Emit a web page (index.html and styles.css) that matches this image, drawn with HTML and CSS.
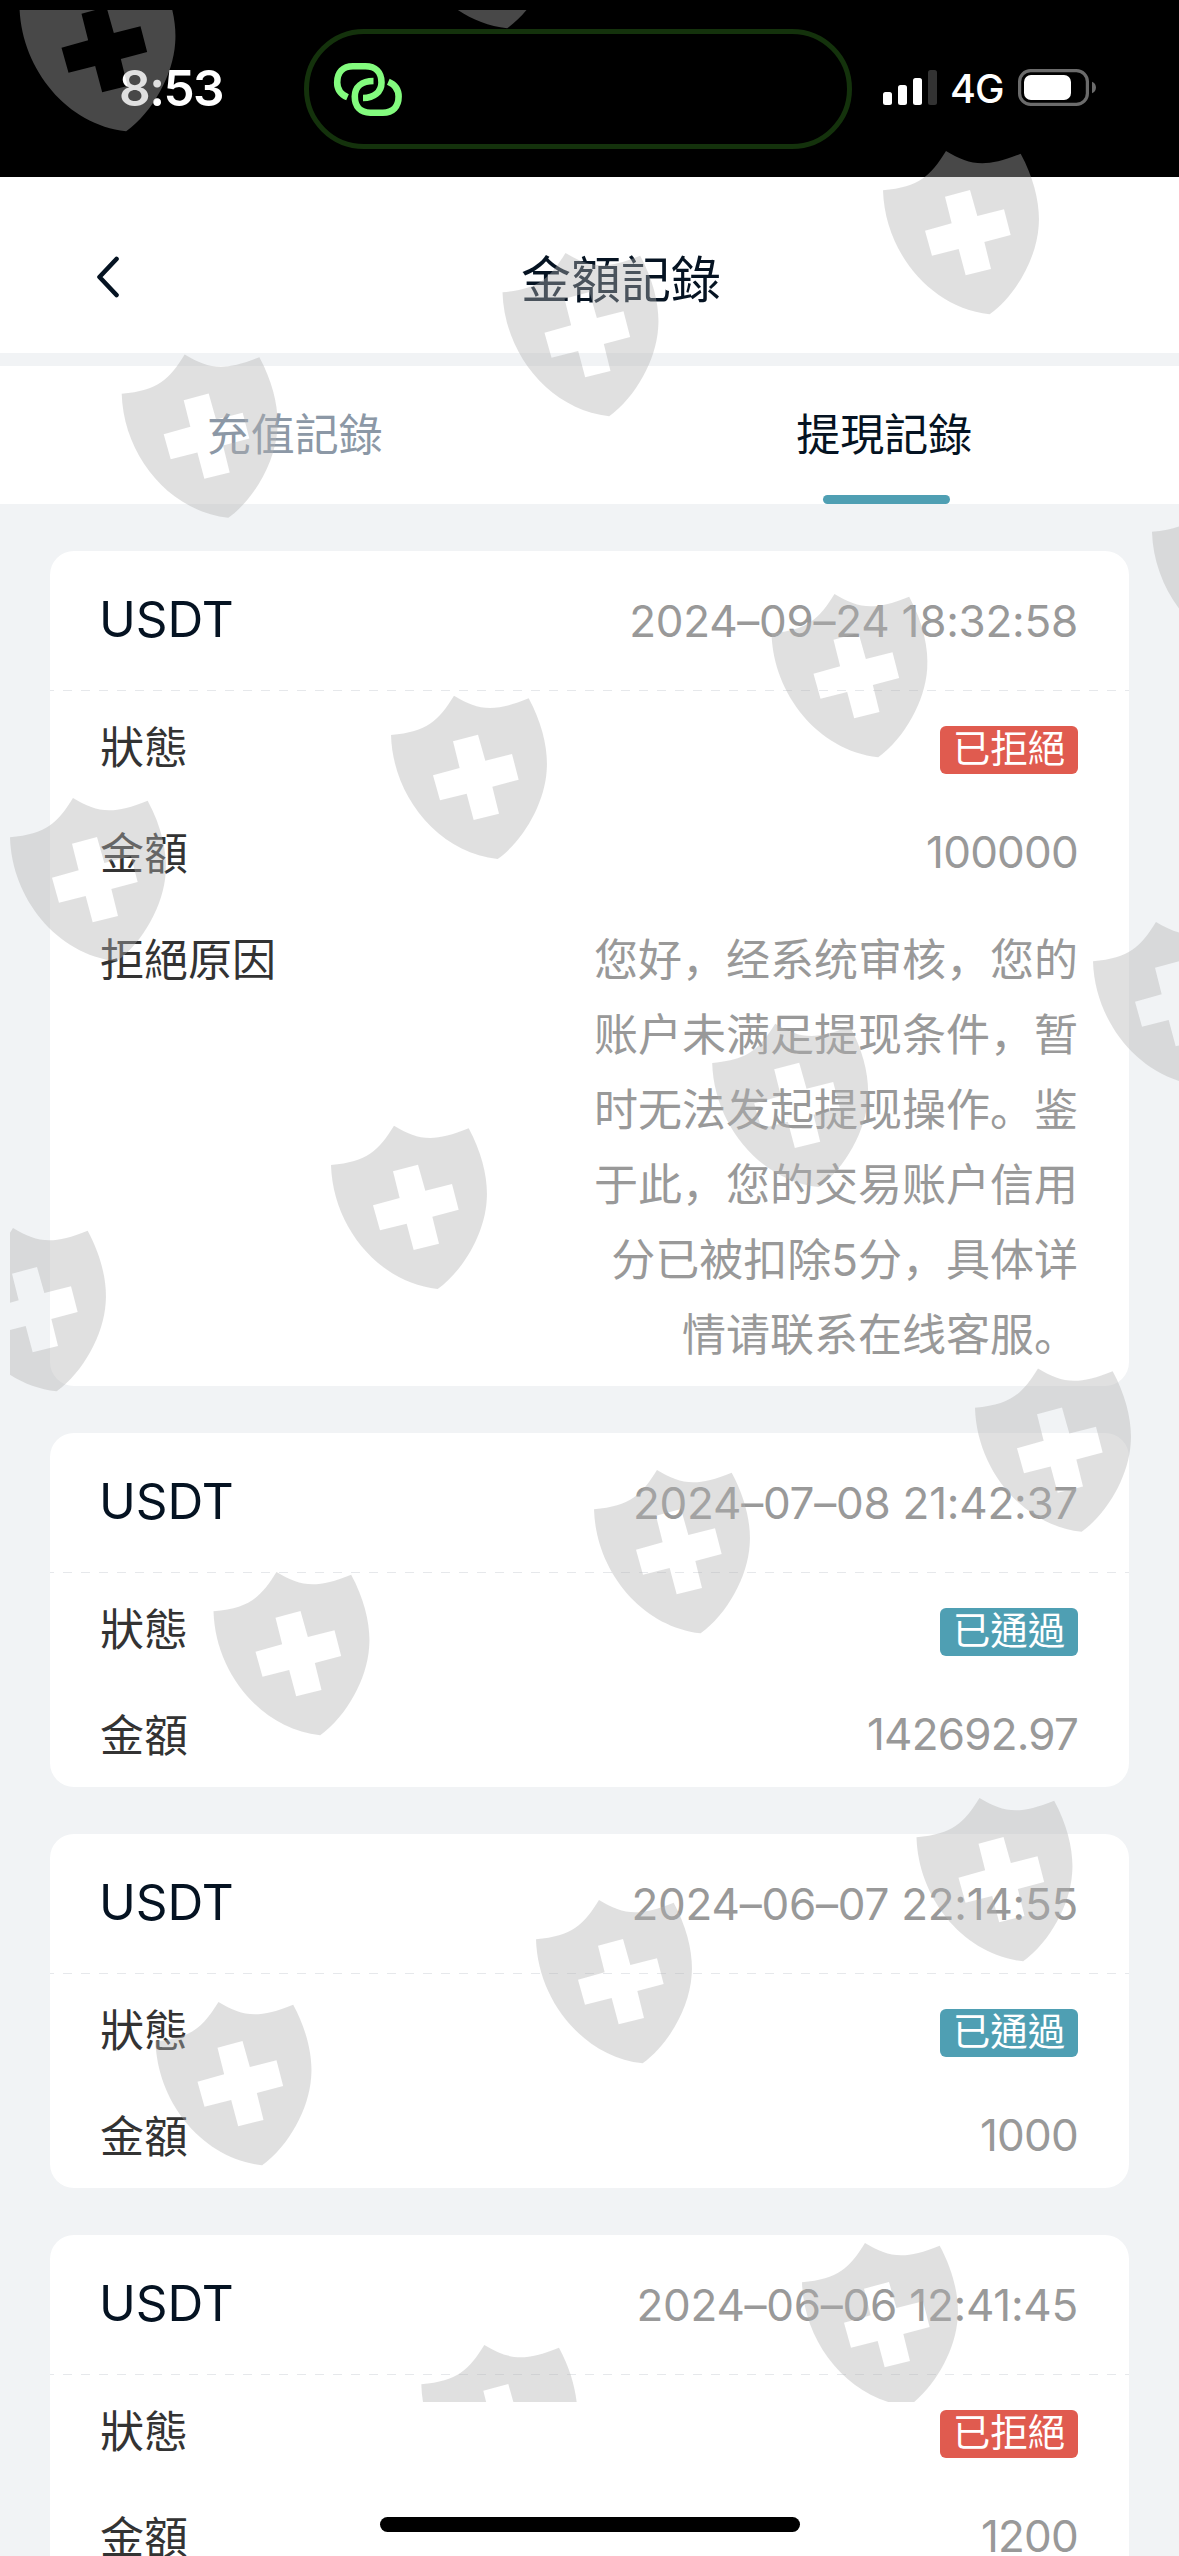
FILE: index.html
```html
<!DOCTYPE html>
<html lang="zh-Hant">
<head>
<meta charset="utf-8">
<title>金額記錄</title>
<link rel="stylesheet" href="styles.css">
</head>
<body>
<div class="screen">
  <header class="status-bar">
    <div class="clock">8:53</div>
    <div class="island">
      <svg class="link-icon" viewBox="333 61 70 55" width="70" height="55">
        <path d="M347.5 96.3C341 93.5 337.2 88.500 337.2 81.500C337.200 71.500 343 65.300 353 65.300H365.500C375.500 65.300 381.500 71.500 381.500 81.500C381.500 91 374 97 363 97"/>
        <path d="M388.300 80.700C394.800 83.500 398.600 88.500 398.600 95.500C398.600 105.500 392.800 111.700 382.800 111.700H370.300C360.300 111.700 354.800 105.500 354.800 95.500C354.800 86 361.800 80 373.500 80"/>
      </svg>
    </div>
    <div class="indicators">
      <div class="signal"><i class="bar b1"></i><i class="bar b2"></i><i class="bar b3"></i><i class="bar b4"></i></div>
      <span class="network">4G</span>
      <svg class="battery" viewBox="0 0 79 37" width="79" height="37">
        <rect class="battery-shell" x="1.600" y="1.600" width="67.800" height="33.800" rx="11"/>
        <rect class="battery-level" x="6" y="6" width="47" height="25" rx="7"/>
        <path class="battery-tip" d="M74 12.800C79.300 14.500 79.300 22.500 74 24.200Z"/>
      </svg>
    </div>
  </header>

  <nav class="navbar">
    <svg class="back" viewBox="0 0 24 42" width="24" height="42"><path d="M21.500 3L4.500 21L21.500 39"/></svg>
    <h1 class="title">金額記錄</h1>
  </nav>

  <div class="tabs">
    <div class="tab"><span>充值記錄</span></div>
    <div class="tab active"><span>提現記錄</span></div>
  </div>

  <main class="records">
    <section class="card">
      <div class="card-head"><span class="coin">USDT</span><time class="date">2024–09–24 18:32:58</time></div>
      <div class="card-body">
        <div class="row"><span class="label">狀態</span><span class="badge rejected">已拒絕</span></div>
        <div class="row"><span class="label">金額</span><span class="value">100000</span></div>
        <div class="row"><span class="label">拒絕原因</span><p class="reason" lang="zh-Hans">您好，经系统审核，您的账户未满足提现条件，暂时无法发起提现操作。鉴于此，您的交易账户信用分已被扣除5分，具体详情请联系在线客服。</p></div>
      </div>
    </section>
    <section class="card">
      <div class="card-head"><span class="coin">USDT</span><time class="date">2024–07–08 21:42:37</time></div>
      <div class="card-body">
        <div class="row"><span class="label">狀態</span><span class="badge approved">已通過</span></div>
        <div class="row"><span class="label">金額</span><span class="value">142692.97</span></div>
      </div>
    </section>
    <section class="card">
      <div class="card-head"><span class="coin">USDT</span><time class="date">2024–06–07 22:14:55</time></div>
      <div class="card-body">
        <div class="row"><span class="label">狀態</span><span class="badge approved">已通過</span></div>
        <div class="row"><span class="label">金額</span><span class="value">1000</span></div>
      </div>
    </section>
    <section class="card">
      <div class="card-head"><span class="coin">USDT</span><time class="date">2024–06–06 12:41:45</time></div>
      <div class="card-body">
        <div class="row"><span class="label">狀態</span><span class="badge rejected">已拒絕</span></div>
        <div class="row"><span class="label">金額</span><span class="value">1200</span></div>
      </div>
    </section>
  </main>

  <svg class="watermark" viewBox="10 10 1169 2392" width="1169" height="2392">
    <defs>
      <path id="shield" fill-rule="evenodd" transform="scale(.33333)" d="M189 0C260 42 305 52 413 8C455 85 472 165 467 225C461 320 400 432 320 490C140 470 5 300 0 118C110 108 142 75 189 0ZM186 137L206 217L126 239L147 314L227 294L248 373L324 354L304 273L383 252L363 175L283 195L261 117Z"/>
    </defs>
    <use href="#shield" x="19.500" y="-32"/>
    <use href="#shield" x="400.500" y="-135"/>
    <use href="#shield" x="883" y="151"/>
    <use href="#shield" x="502.500" y="253"/>
    <use href="#shield" x="121.700" y="354.500"/>
    <use href="#shield" x="1152" y="492.500"/>
    <use href="#shield" x="771.500" y="594"/>
    <use href="#shield" x="391" y="695.700"/>
    <use href="#shield" x="10" y="798"/>
    <use href="#shield" x="1093" y="922"/>
    <use href="#shield" x="712.200" y="1023.700"/>
    <use href="#shield" x="331" y="1125.700"/>
    <use href="#shield" x="-50" y="1228"/>
    <use href="#shield" x="975" y="1368.500"/>
    <use href="#shield" x="594" y="1470"/>
    <use href="#shield" x="213.500" y="1572"/>
    <use href="#shield" x="916.500" y="1798"/>
    <use href="#shield" x="536" y="1900"/>
    <use href="#shield" x="155.500" y="2002"/>
    <use href="#shield" x="802" y="2243"/>
    <use href="#shield" x="421.300" y="2345"/>
  </svg>
  <div class="home-indicator"></div>
</div>
</body>
</html>
```
FILE: styles.css
```css
* { box-sizing: border-box; margin: 0; padding: 0; }

body {
  width: 1179px;
  height: 2556px;
  overflow: hidden;
  background: #f1f3f5;
  font-family: Inter, "Noto Sans CJK TC", sans-serif;
  font-weight: 400;
  color: #051322;
}

.screen {
  position: relative;
  display: flex;
  flex-direction: column;
  height: 2556px;
  overflow: hidden;
}

/* Status bar */
.status-bar {
  flex: none;
  display: grid;
  grid-template-columns: 304px 548px 1fr;
  height: 177px;
  padding-top: 29px;
  background: #000;
  color: #fff;
}

.clock {
  height: 120px;
  padding-left: 119px;
  font-size: 49.5px;
  font-weight: 600;
  line-height: 118px;
  letter-spacing: -1.5px;
}

.island {
  display: flex;
  align-items: center;
  height: 120px;
  padding-left: 24px;
  border: 5px solid #14320c;
  border-radius: 60px;
}

.link-icon { fill: none; stroke: #83fb7e; stroke-width: 6.6; }

.indicators {
  display: flex;
  align-items: center;
  height: 117px;
  padding-left: 31px;
}

.signal { display: flex; align-items: flex-end; gap: 6px; height: 35px; }
.bar { width: 9px; border-radius: 2.5px; background: #fff; }
.b1 { height: 13px; }
.b2 { height: 20px; }
.b3 { height: 27px; }
.b4 { height: 35px; background: #333; }

.network {
  width: 68px;
  margin-left: 13px;
  padding-top: 3px;
  font-size: 39.5px;
  font-weight: 500;
  letter-spacing: -1px;
  line-height: 48px;
}

.battery-shell { fill: none; stroke: #6b6b6b; stroke-width: 3.2; }
.battery-level { fill: #fff; }
.battery-tip { fill: #6b6b6b; }

/* Page header */
.navbar {
  flex: none;
  display: grid;
  grid-template-columns: 119px 1fr 119px;
  align-items: center;
  height: 176px;
  background: #fff;
}

.back {
  justify-self: end;
  margin-top: 24px;
  fill: none;
  stroke: #051322;
  stroke-width: 4.6;
  stroke-linecap: round;
  stroke-linejoin: round;
}

.title {
  padding: 29px 0 0 63px;
  font-size: 50px;
  font-weight: 400;
  line-height: 74px;
  text-align: center;
}

.tabs {
  flex: none;
  display: flex;
  height: 138px;
  margin-top: 13px;
  background: #fff;
}

.tab {
  display: flex;
  flex: 1;
  flex-direction: column;
  align-items: center;
  justify-content: space-between;
  padding-top: 37px;
  font-size: 44px;
  line-height: 64px;
  color: #8c98a6;
}

.tab.active { color: #051322; }

.tab.active::after {
  content: "";
  width: 127px;
  height: 9px;
  margin-left: 4px;
  border-radius: 4.5px;
  background: #4f9fb3;
}

/* Records */
.records {
  flex: none;
  display: flex;
  flex-direction: column;
  gap: 47px;
  padding: 47px 50px 0;
}

.card { border-radius: 24px; background: #fff; }

.card-head {
  display: flex;
  align-items: center;
  justify-content: space-between;
  height: 140px;
  padding: 0 51px 0 49px;
  background: linear-gradient(90deg, #e6e8eb 50%, transparent 0) 13px 100% / 18px 1px repeat-x;
}

.coin {
  padding-bottom: 4px;
  font-size: 49.5px;
  font-weight: 400;
  letter-spacing: 0;
}

.date, .value {
  color: #999;
  font-size: 44px;
  font-weight: 400;
  letter-spacing: -.8px;
}

.date { letter-spacing: -.25px; }

.card-body { padding-top: 2px; color: #333; }

.row {
  display: flex;
  justify-content: space-between;
  padding: 15.5px 51px 15.5px 50px;
  font-size: 44px;
  line-height: 75px;
}

.label, .reason { position: relative; top: 2px; }

.reason {
  width: 486px;
  color: #999;
  font-family: Inter, "Noto Sans CJK SC", sans-serif;
  text-align: right;
}

.badge {
  width: 138px;
  height: 48px;
  margin-top: 17px;
  border-radius: 6px;
  color: #fff;
  font-size: 37.5px;
  line-height: 46px;
  text-align: center;
}

.rejected { background: #e05b4f; }
.approved { background: #4f9fb3; }

/* Overlays */
.watermark {
  position: absolute;
  left: 10px;
  top: 10px;
  overflow: hidden;
  fill: #b2b2b2;
  fill-opacity: .404;
}

.home-indicator {
  position: absolute;
  left: 380px;
  top: 2517px;
  width: 420px;
  height: 15px;
  border-radius: 7.5px;
  background: #000;
}
```
